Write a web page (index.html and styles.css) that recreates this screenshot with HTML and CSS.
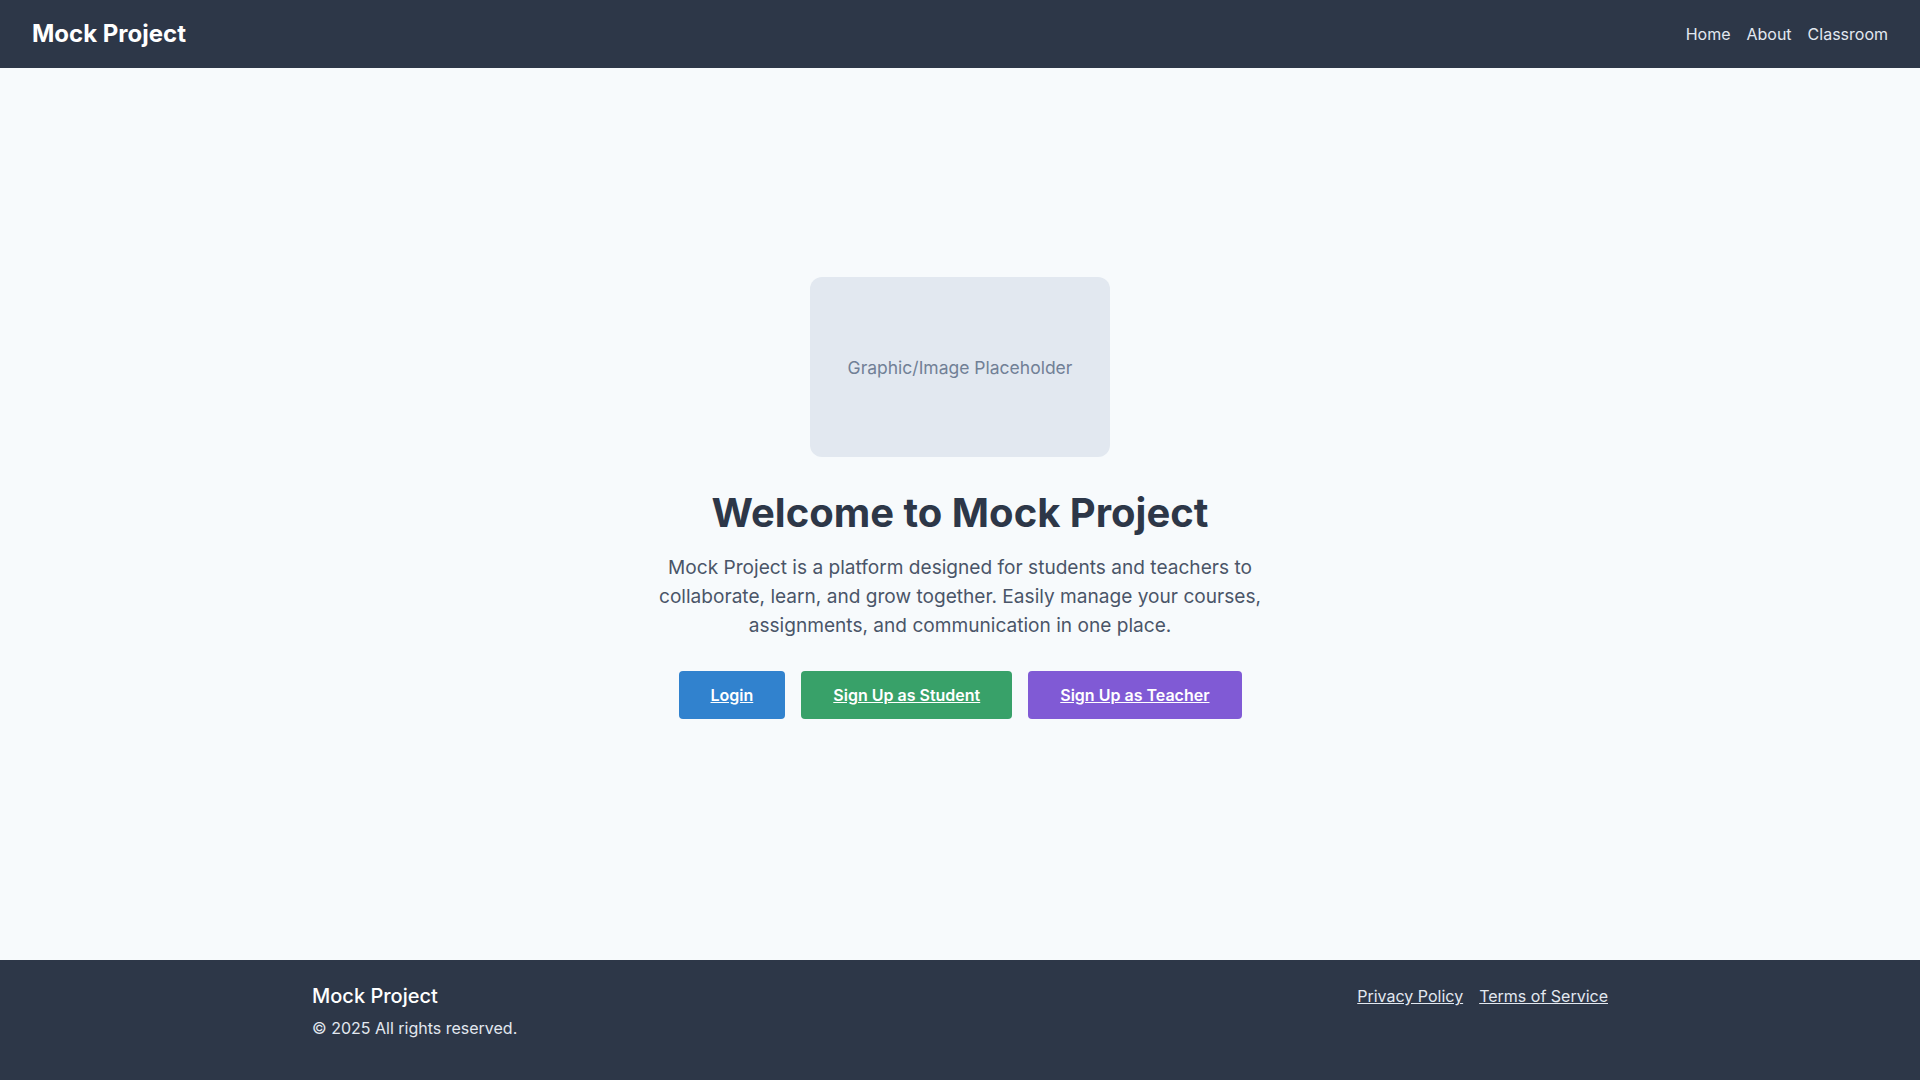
FILE: index.html
```html
<!DOCTYPE html>
<html lang="en">
<head>
<meta charset="utf-8">
<title>Mock Project</title>
<link rel="stylesheet" href="styles.css">
</head>
<body>
<header class="site-header">
  <a class="brand" href="#">Mock Project</a>
  <nav class="nav">
    <a href="#">Home</a>
    <a href="#">About</a>
    <a href="#">Classroom</a>
  </nav>
</header>
<main class="main">
  <section class="hero">
    <div class="placeholder">Graphic/Image Placeholder</div>
    <h1 class="title">Welcome to Mock Project</h1>
    <p class="lead">Mock Project is a platform designed for students and teachers to collaborate, learn, and grow together. Easily manage your courses, assignments, and communication in one place.</p>
    <div class="actions">
      <a class="btn btn-blue" href="#">Login</a>
      <a class="btn btn-green" href="#">Sign Up as Student</a>
      <a class="btn btn-purple" href="#">Sign Up as Teacher</a>
    </div>
  </section>
</main>
<footer class="site-footer">
  <div class="footer-inner">
    <div class="footer-left">
      <div class="footer-brand">Mock Project</div>
      <div class="footer-copy">© 2025 All rights reserved.</div>
    </div>
    <div class="footer-links">
      <a href="#">Privacy Policy</a>
      <a href="#">Terms of Service</a>
    </div>
  </div>
</footer>
</body>
</html>
```
FILE: styles.css
```css
* { box-sizing: border-box; }
html, body { height: 100%; }
body {
  margin: 0;
  font-family: "Inter", "Noto Sans", sans-serif;
  background: #f7fafc;
  color: #2d3748;
  display: flex;
  flex-direction: column;
  min-height: 100vh;
}
a { color: inherit; }

.site-header {
  background: #2d3748;
  height: 68px;
  padding: 0 32px;
  display: flex;
  align-items: center;
  justify-content: space-between;
}
.brand {
  color: #ffffff;
  font-size: 24px;
  font-weight: 700;
  line-height: 32px;
  text-decoration: none;
}
.nav {
  display: flex;
  gap: 16px;
}
.nav a {
  color: #e2e8f0;
  font-size: 16px;
  line-height: 24px;
  text-decoration: none;
}

.main {
  flex: 1;
  display: flex;
  align-items: center;
  justify-content: center;
  padding-bottom: 32px;
}
.hero {
  display: flex;
  flex-direction: column;
  align-items: center;
  text-align: center;
}
.placeholder {
  width: 300px;
  height: 180px;
  background: #e2e8f0;
  border-radius: 12px;
  display: flex;
  align-items: center;
  justify-content: center;
  color: #718096;
  font-size: 17.5px;
}
.title {
  margin: 32px 0 0;
  font-size: 40px;
  line-height: 48px;
  font-weight: 700;
  color: #2d3748;
}
.lead {
  margin: 16px 0 0;
  max-width: 620px;
  font-size: 19.1px;
  line-height: 29px;
  color: #4a5568;
}
.actions {
  margin-top: 31px;
  display: flex;
  gap: 16px;
}
.btn {
  display: block;
  height: 48px;
  padding: 0 32px;
  line-height: 48px;
  border-radius: 4px;
  color: #ffffff;
  font-size: 16px;
  font-weight: 600;
  text-decoration: underline;
}
.btn-blue { background: #3182ce; }
.btn-green { background: #38a169; }
.btn-purple { background: #805ad5; }

.site-footer {
  background: #2d3748;
  height: 120px;
  color: #ffffff;
}
.footer-inner {
  max-width: 1296px;
  margin: 0 auto;
  padding-top: 22px;
  display: flex;
  justify-content: space-between;
  align-items: flex-start;
}
.footer-brand {
  font-size: 20px;
  line-height: 28px;
  font-weight: 500;
}
.footer-copy {
  margin-top: 6px;
  font-size: 16px;
  line-height: 24px;
  color: #e2e8f0;
}
.footer-links {
  display: flex;
  gap: 16px;
  margin-top: 2px;
}
.footer-links a {
  font-size: 16px;
  line-height: 24px;
  color: #e2e8f0;
  text-decoration: underline;
}
```
